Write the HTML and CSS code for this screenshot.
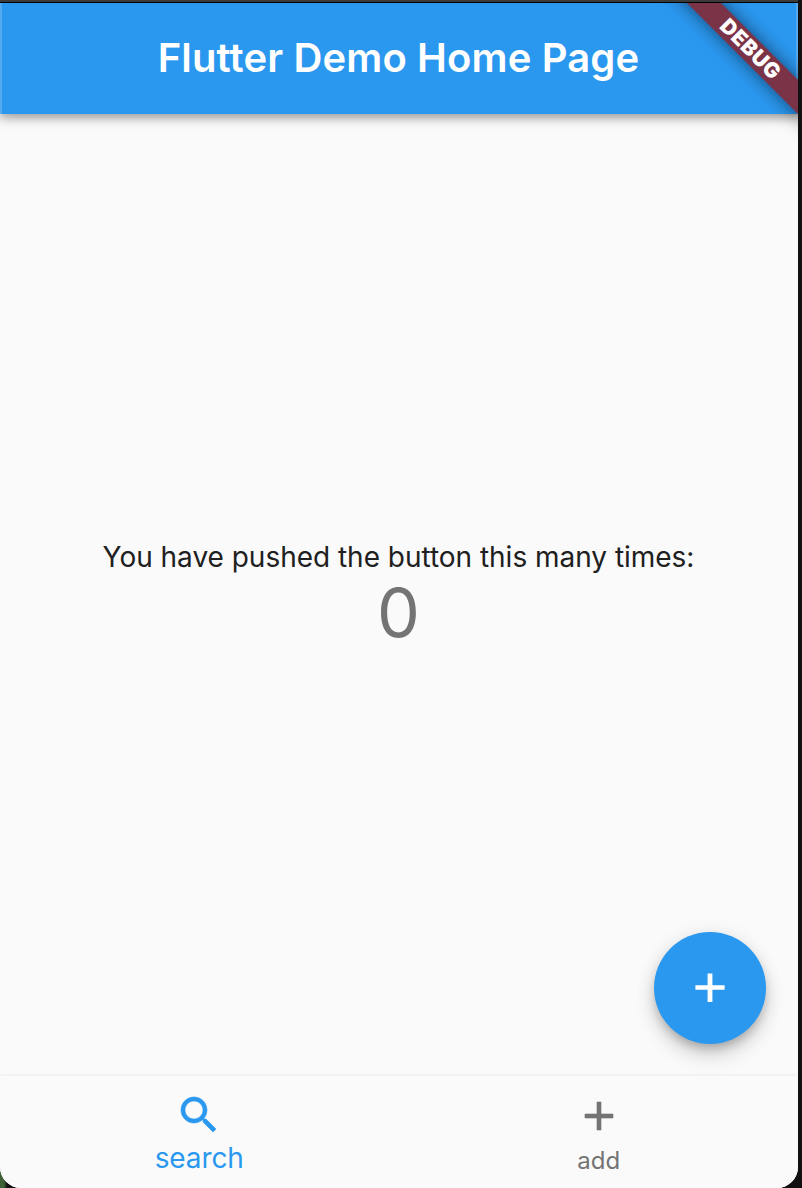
FILE: index.html
```html
<!DOCTYPE html>
<html lang="en">
<head>
<meta charset="utf-8">
<title>Flutter Demo Home Page</title>
<link rel="stylesheet" href="styles.css">
</head>
<body>
<div class="app">
  <header class="app-bar"><h1 class="title">Flutter Demo Home Page</h1></header>
  <main class="content">
    <p class="message">You have pushed the button this many times:</p>
    <p class="count">0</p>
    <button class="fab" aria-label="Increment">
      <svg class="icon" viewBox="0 0 24 24"><path d="M19.3 12.9h-6.1v6.1h-2.4v-6.1H4.7v-2.3h6.1V4.7h2.4v5.9h6.1z"/></svg>
    </button>
  </main>
  <nav class="bottom-nav">
    <a class="item active">
      <svg class="icon outlined" viewBox="0 0 24 24"><path d="M15.5 14h-.79l-.28-.27C15.41 12.59 16 11.11 16 9.5 16 5.91 13.09 3 9.5 3S3 5.91 3 9.5 5.91 16 9.5 16c1.61 0 3.09-.59 4.23-1.57l.27.28v.79l5 4.99L20.49 19l-4.99-5zm-6 0C7.01 14 5 11.99 5 9.5S7.01 5 9.5 5 14 7.01 14 9.5 11.99 14 9.5 14z"/></svg>
      <span class="label">search</span>
    </a>
    <a class="item">
      <svg class="icon outlined" viewBox="0 0 24 24"><path d="M19 13h-6v6h-2v-6H5v-2h6V5h2v6h6z"/></svg>
      <span class="label">add</span>
    </a>
  </nav>
  <div class="banner-clip"><div class="debug-banner">DEBUG</div></div>
</div>
</body>
</html>
```
FILE: styles.css
```css
* { box-sizing: border-box; }
body {
  margin: 0;
  height: 1188px;
  padding-right: 4px;
  overflow: hidden;
  background: linear-gradient(90deg, #3d6035 4px, #111 7px);
  font-family: Inter, Roboto, sans-serif;
}
.app {
  position: relative;
  display: flex;
  flex-direction: column;
  height: 1188px;
  overflow: hidden;
  border-radius: 0 0 21px 21px;
  background: #fafafa;
}
.app-bar {
  z-index: 1;
  flex: none;
  display: flex;
  align-items: center;
  justify-content: center;
  height: 114px;
  padding: 0 1px 1px 0;
  border-top: 2px solid #3b3b3b;
  background: linear-gradient(#000 1px, transparent 1px),
    linear-gradient(90deg, #55abf1 2px, transparent 2px calc(100% - 2px), #55abf1 calc(100% - 2px)),
    #2b98f0;
  box-shadow: 0 4px 8px rgba(0, 0, 0, .2), 0 2px 14px rgba(0, 0, 0, .26);
}
.title {
  margin: 0;
  color: #fff;
  font-size: 40px;
  font-weight: 600;
  line-height: 48px;
  letter-spacing: .13px;
  white-space: nowrap;
}
.content {
  position: relative;
  flex: 1;
  display: flex;
  flex-direction: column;
  align-items: center;
  justify-content: center;
  padding-right: 1px;
}
.message, .count { margin: 0; white-space: nowrap; }
.message {
  padding-top: 2px;
  color: #202020;
  font-size: 28px;
  line-height: 33px;
  letter-spacing: -.02px;
}
.count { color: #747474; font-size: 68px; line-height: 76px; padding-bottom: 2px; }
.icon { display: block; width: 48px; height: 48px; fill: currentColor; }
.outlined { stroke: currentColor; stroke-width: .3; }
.fab {
  position: absolute;
  right: 32px;
  bottom: 32px;
  display: flex;
  align-items: center;
  justify-content: center;
  width: 112px;
  height: 112px;
  padding: 0;
  border: 0;
  border-radius: 50%;
  background: #2b98f0;
  color: #fff;
  box-shadow: 0 6px 10px -2px rgba(0, 0, 0, .2), 0 12px 20px rgba(0, 0, 0, .14), 0 2px 20px rgba(0, 0, 0, .08);
}
.bottom-nav {
  z-index: 1;
  flex: none;
  display: flex;
  height: 112px;
  background: #fafafa;
  box-shadow: 0 0 4px rgba(0, 0, 0, .09);
}
.item {
  flex: 1;
  display: flex;
  flex-direction: column;
  align-items: center;
  padding-top: 16px;
  color: #747474;
}
.label { font-size: 24px; line-height: 34px; margin-top: 4px; }
.active { padding: 15px 1px 0 0; color: #2b98f0; }
.active .label { font-size: 28px; line-height: 34px; margin-top: 2px; letter-spacing: -.1px; }
/* Ribbon across the top-right corner */
.banner-clip {
  position: absolute;
  z-index: 2;
  top: 3px;
  right: 0;
  width: 160px;
  height: 160px;
  overflow: hidden;
}
.debug-banner {
  position: absolute;
  top: 34px;
  left: -8px;
  width: 240px;
  height: 24px;
  transform: rotate(45deg);
  background: #7b3347;
  box-shadow: 0 0 18px rgba(0, 0, 0, .55);
  color: #fff;
  font-size: 21px;
  font-weight: 900;
  line-height: 24px;
  letter-spacing: .6px;
  text-indent: 1px;
  text-align: center;
}
```
